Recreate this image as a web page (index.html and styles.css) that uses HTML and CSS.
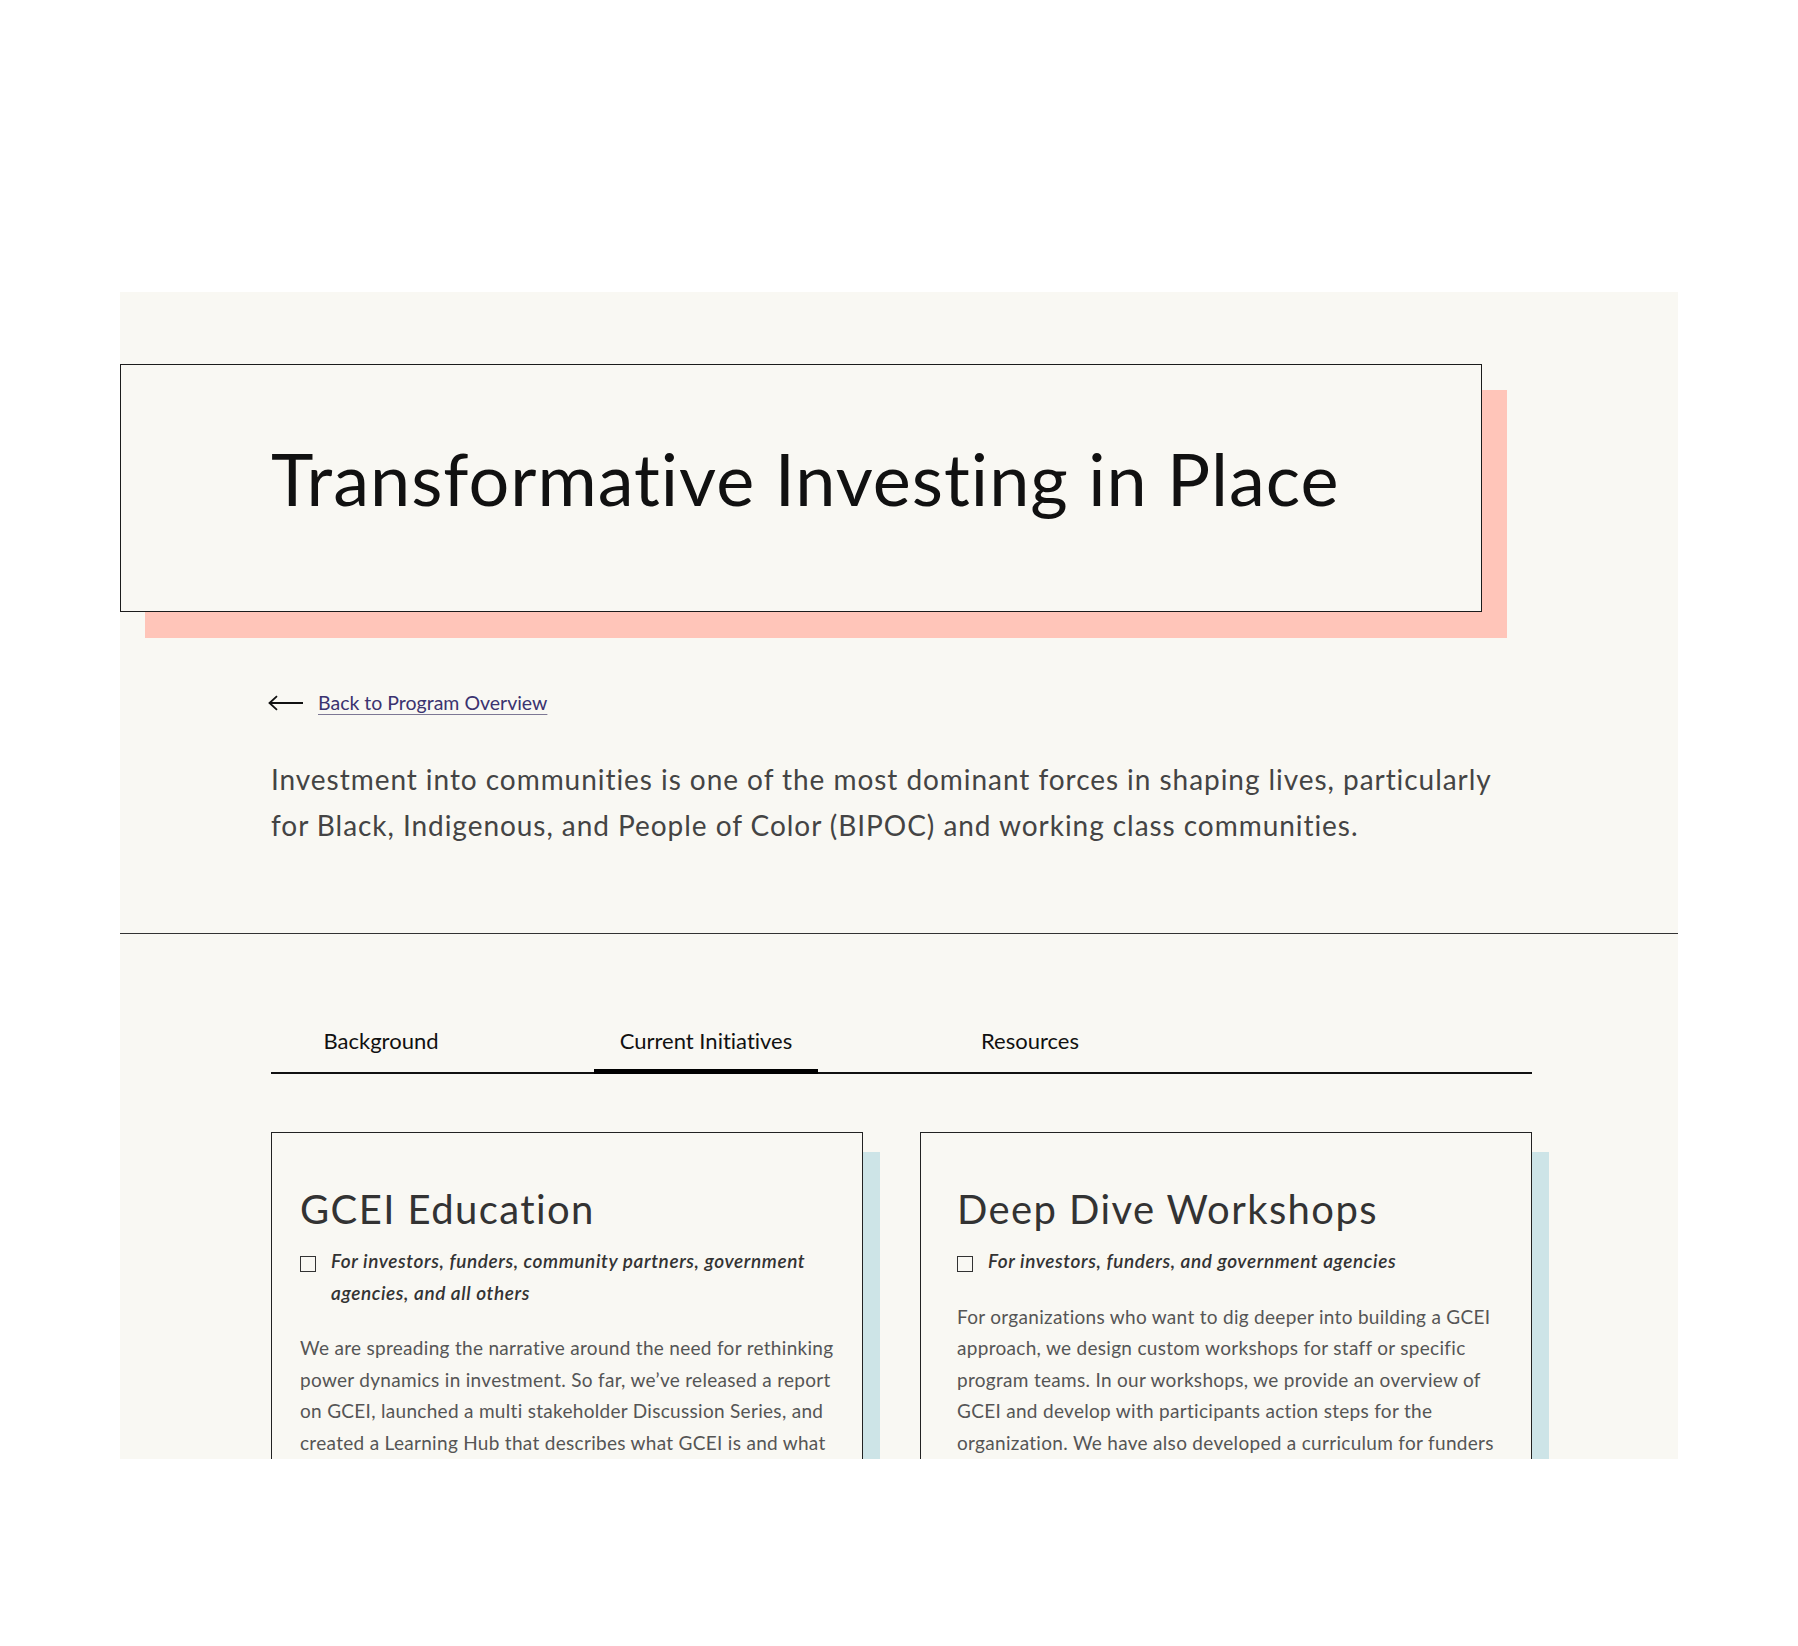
FILE: index.html
```html
<!DOCTYPE html>
<html lang="en">
<head>
<meta charset="utf-8">
<title>Transformative Investing in Place</title>
<link rel="stylesheet" href="styles.css">
</head>
<body>
<div class="page">
  <main class="panel">
    <header class="hero-box">
      <h1 class="hero-title">Transformative Investing in Place</h1>
    </header>

    <section class="intro">
      <a class="back-link" href="#">
        <svg class="back-arrow" width="36" height="16" viewBox="0 0 36 16" aria-hidden="true">
          <path d="M1.5 8 H35 M9 1.2 L1.5 8 L9 14.8" fill="none" stroke="#111" stroke-width="1.8"/>
        </svg>
        <span class="back-text">Back to Program Overview</span>
      </a>
      <p class="lead">Investment into communities is one of the most dominant forces in shaping lives, particularly for Black, Indigenous, and People of Color (BIPOC) and working class communities.</p>
    </section>

    <section class="content">
      <nav class="tabs">
        <div class="tab"><span class="tab-label">Background</span></div>
        <div class="tab"><span class="tab-label active">Current Initiatives</span></div>
        <div class="tab"><span class="tab-label">Resources</span></div>
      </nav>

      <div class="cards">
        <article class="card card-left">
          <h2 class="card-title">GCEI Education</h2>
          <p class="audience"><span class="box"></span><em>For investors, funders, community partners, government agencies, and all others</em></p>
          <p class="card-text">We are spreading the narrative around the need for rethinking power dynamics in investment. So far, we’ve released a report on GCEI, launched a multi stakeholder Discussion Series, and created a Learning Hub that describes what GCEI is and what it looks like in practice.</p>
        </article>
        <article class="card card-right">
          <h2 class="card-title">Deep Dive Workshops</h2>
          <p class="audience"><span class="box"></span><em>For investors, funders, and government agencies</em></p>
          <p class="card-text">For organizations who want to dig deeper into building a GCEI approach, we design custom workshops for staff or specific program teams. In our workshops, we provide an overview of GCEI and develop with participants action steps for the organization. We have also developed a curriculum for funders and investors.</p>
        </article>
      </div>
    </section>
  </main>
</div>
</body>
</html>
```

FILE: styles.css
```css
* { box-sizing: border-box; }

html, body {
  margin: 0;
  padding: 0;
  background: #ffffff;
}

body {
  font-family: Lato, "Open Sans", "Noto Sans", sans-serif;
  font-variant-ligatures: none;
  color: #333;
}

.page {
  padding-top: 292px;
  min-height: 1646px;
}

.panel {
  width: 1558px;
  height: 1167px;
  margin-left: 120px;
  background: #f9f8f3;
  overflow: hidden;
  padding-top: 72px;
}

.hero-box {
  width: 1362px;
  height: 248px;
  border: 1px solid #1c1c1c;
  background: #f9f8f3;
  box-shadow: 25px 26px 0 0 #ffc5b9;
  padding: 70px 0 0 150px;
}

.hero-title {
  margin: 0;
  font-size: 72px;
  line-height: 1.2;
  font-weight: 400;
  color: #111;
  letter-spacing: 1px;
}

.intro {
  padding: 76px 0 0 151px;
  border-bottom: 1px solid #333;
  padding-bottom: 85px;
}

.back-link {
  display: flex;
  align-items: center;
  gap: 14px;
  margin-left: -3px;
  height: 30px;
  text-decoration: none;
}

.back-arrow { display: block; flex: none; }

.back-text {
  font-size: 19.5px;
  line-height: 30px;
  color: #3b3370;
  text-decoration: underline;
  text-decoration-color: #7d7894;
  text-decoration-thickness: 1px;
  text-underline-offset: 4px;
}

.lead {
  margin: 38px 0 0;
  width: 1248px;
  font-size: 28px;
  line-height: 46px;
  letter-spacing: 0.95px;
  color: #444;
}

.content {
  padding: 94px 146px 0 151px;
}

.tabs {
  display: grid;
  grid-template-columns: 220px 430px 218px;
  border-bottom: 2px solid #111;
}

.tab {
  display: flex;
  justify-content: center;
  align-items: flex-end;
}

.tab-label {
  display: block;
  padding: 0 26px 15px;
  margin-bottom: -2px;
  border-bottom: 5px solid transparent;
  font-size: 22px;
  line-height: 26px;
  color: #111;
}

.tab-label.active {
  border-bottom-color: #000;
}

.cards {
  display: grid;
  grid-template-columns: 592px 612px;
  column-gap: 57px;
  margin-top: 58px;
  align-items: start;
}

.card {
  border: 1px solid #222;
  background: #f9f8f3;
  box-shadow: 17px 20px 0 0 #cde4e7;
  padding-top: 52px;
  padding-bottom: 40px;
}

.card-left { padding-left: 28px; padding-right: 28px; }
.card-right { padding-left: 36px; padding-right: 36px; }

.card-title {
  margin: 0;
  font-size: 40px;
  line-height: 48px;
  font-weight: 400;
  letter-spacing: 1.4px;
  color: #333;
}

.audience {
  margin: 12px 0 0;
  display: flex;
  gap: 15px;
  font-size: 19px;
  line-height: 31.5px;
  color: #333;
}

.audience em {
  font-style: italic;
  font-weight: 600;
  letter-spacing: 0.6px;
}

.box {
  flex: none;
  width: 16px;
  height: 16px;
  margin-top: 11px;
  border: 1.5px solid #333;
}

.card-text {
  margin: 24px 0 0;
  font-size: 19px;
  line-height: 31.5px;
  letter-spacing: 0.3px;
  color: #555;
}
```
